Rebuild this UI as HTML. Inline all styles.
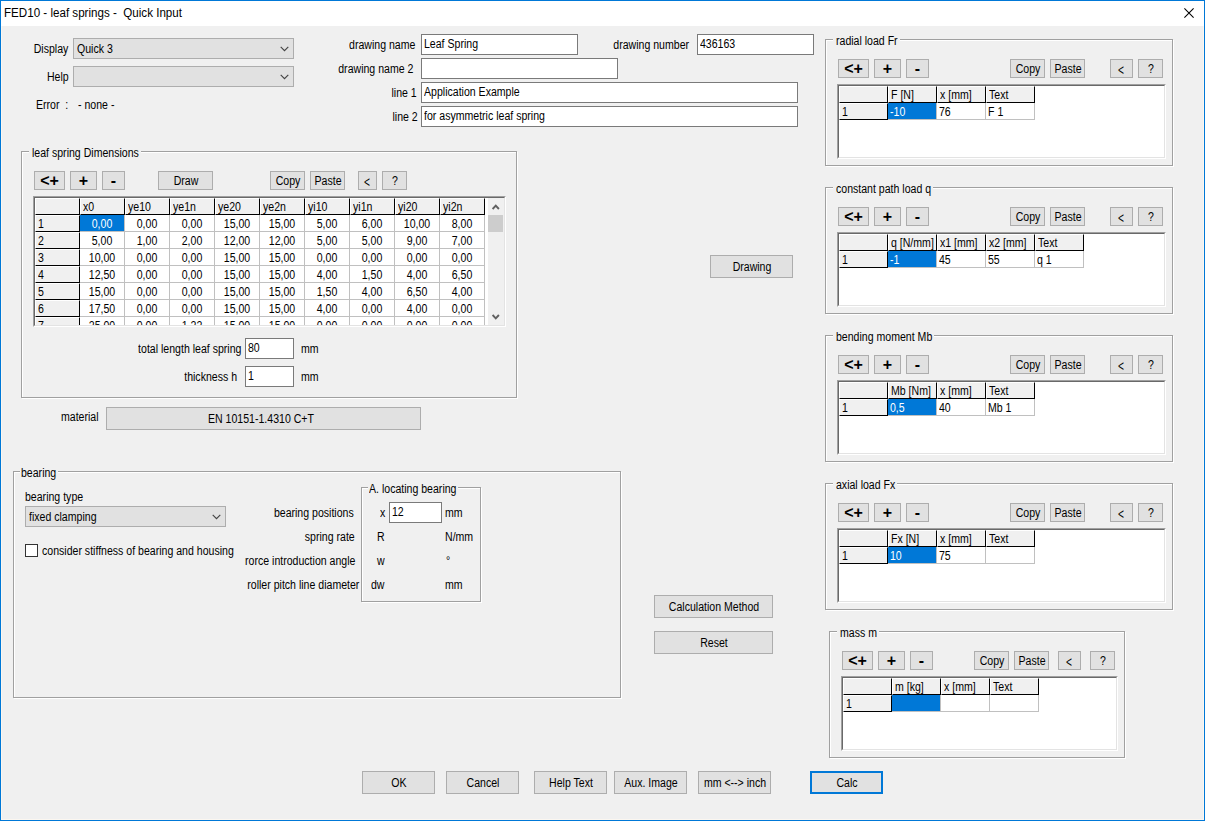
<!DOCTYPE html>
<html lang="en"><head><meta charset="utf-8"><title>FED10 - leaf springs - Quick Input</title>
<style>
html,body{margin:0;padding:0;background:#f0f0f0;overflow:hidden}
#w{position:relative;width:1205px;height:821px;overflow:hidden;font-family:"Liberation Sans",sans-serif;font-size:12px;line-height:14px;color:#000}
#w div,#w span.t,#w svg.abs,.abs{position:absolute;box-sizing:border-box}
.t{white-space:pre;display:block}
.b{font-weight:bold;font-size:16px}
.ttl{font-size:12px}
.lt{font-size:15px}
.btn{background:#e1e1e1;border:1px solid #adadad}
.def{border:2px solid #0078d7}
.inp{background:#fff;border:1px solid #7a7a7a}
.combo{background:#e1e1e1;border:1px solid #adadad}
.chk{background:#fff;border:1px solid #333}
.fg{border:1px solid #a0a0a0}
.fw{border:1px solid #fff}
.fl{background:#f0f0f0;line-height:14px}
.grido{border:1px solid;border-color:#a0a0a0 #fff #fff #a0a0a0}
.grid{background:#fff;border:1px solid;border-color:#696969 #e3e3e3 #e3e3e3 #696969;overflow:hidden}
.fx{background:#f0f0f0;border-top:1px solid #fff;border-left:1px solid #fff;border-right:1px solid #000;border-bottom:1px solid #000}
.dc{background:#fff;border-right:1px solid #c0c0c0;border-bottom:1px solid #c0c0c0}
.sel{background:#0078d7;color:#fff}
.sb{background:#f0f0f0}
</style></head>
<body><div id="w">
<div class="abs" style="left:0;top:0;width:1205px;height:821px;background:#f0f0f0"></div>
<div class="abs" style="left:0;top:0;width:1205px;height:26px;background:#fff"></div>
<span class="t ttl" style="left:4px;top:6px;transform-origin:0 0;transform:scaleX(0.967);">FED10 - leaf springs -  Quick Input</span>
<svg class="abs" style="left:1184px;top:8px" width="10" height="10" viewBox="0 0 10 10"><path d="M0.4 0.4 L9.6 9.6 M9.6 0.4 L0.4 9.6" stroke="#000" stroke-width="1.05" fill="none"/></svg>
<span class="t " style="right:1137px;top:42px;transform-origin:100% 0;transform:scaleX(0.88);">Display</span>
<div class="combo" style="left:73px;top:38px;width:221px;height:21px;"></div>
<span class="t " style="left:77px;top:42px;transform-origin:0 0;transform:scaleX(0.88);">Quick 3</span>
<svg class="abs" style="left:280px;top:46.0px" width="9" height="6" viewBox="0 0 9 6"><path d="M0.7 0.9 L4.5 4.7 L8.3 0.9" fill="none" stroke="#444" stroke-width="1.15"/></svg>
<span class="t " style="right:1136px;top:70px;transform-origin:100% 0;transform:scaleX(0.88);">Help</span>
<div class="combo" style="left:73px;top:66px;width:221px;height:21px;"></div>
<svg class="abs" style="left:280px;top:74.0px" width="9" height="6" viewBox="0 0 9 6"><path d="M0.7 0.9 L4.5 4.7 L8.3 0.9" fill="none" stroke="#444" stroke-width="1.15"/></svg>
<span class="t " style="left:36px;top:98px;transform-origin:0 0;transform:scaleX(0.88);">Error  :</span>
<span class="t " style="left:78px;top:98px;transform-origin:0 0;transform:scaleX(0.88);">- none -</span>
<span class="t " style="right:790px;top:38px;transform-origin:100% 0;transform:scaleX(0.88);">drawing name</span>
<div class="inp" style="left:421px;top:34px;width:157px;height:21px;"></div>
<span class="t " style="left:424px;top:37px;transform-origin:0 0;transform:scaleX(0.88);">Leaf Spring</span>
<span class="t " style="right:516px;top:38px;transform-origin:100% 0;transform:scaleX(0.88);">drawing number</span>
<div class="inp" style="left:697px;top:34px;width:117px;height:21px;"></div>
<span class="t " style="left:700px;top:37px;transform-origin:0 0;transform:scaleX(0.88);">436163</span>
<span class="t " style="right:792px;top:62px;transform-origin:100% 0;transform:scaleX(0.88);">drawing name 2</span>
<div class="inp" style="left:421px;top:58px;width:197px;height:21px;"></div>
<span class="t " style="right:788px;top:86px;transform-origin:100% 0;transform:scaleX(0.88);">line 1</span>
<div class="inp" style="left:421px;top:82px;width:377px;height:21px;"></div>
<span class="t " style="left:424px;top:85px;transform-origin:0 0;transform:scaleX(0.88);">Application Example</span>
<span class="t " style="right:787px;top:110px;transform-origin:100% 0;transform:scaleX(0.88);">line 2</span>
<div class="inp" style="left:421px;top:106px;width:377px;height:21px;"></div>
<span class="t " style="left:424px;top:109px;transform-origin:0 0;transform:scaleX(0.88);">for asymmetric leaf spring</span>
<div class="fw" style="left:22px;top:152px;width:496px;height:247px;"></div>
<div class="fg" style="left:21px;top:151px;width:496px;height:247px;"></div>
<div class="fl" style="left:29px;top:151px;width:112px;height:2px;"></div>
<span class="t " style="left:32px;top:146px;transform-origin:0 0;transform:scaleX(0.88);">leaf spring Dimensions</span>
<div class="btn" style="left:34px;top:171px;width:31px;height:19px;"></div>
<span class="t b" style="left:-100.5px;width:300px;text-align:center;top:174px;transform-origin:50% 0;transform:scaleX(1);">&lt;+</span>
<div class="btn" style="left:70px;top:171px;width:27px;height:19px;"></div>
<span class="t b" style="left:-66.5px;width:300px;text-align:center;top:174px;transform-origin:50% 0;transform:scaleX(1);">+</span>
<div class="btn" style="left:102px;top:171px;width:23px;height:19px;"></div>
<span class="t b" style="left:-36.5px;width:300px;text-align:center;top:174px;transform-origin:50% 0;transform:scaleX(1);">-</span>
<div class="btn" style="left:158px;top:171px;width:55px;height:19px;"></div>
<span class="t " style="left:35.5px;width:300px;text-align:center;top:174px;transform-origin:50% 0;transform:scaleX(0.88);">Draw</span>
<div class="btn" style="left:270px;top:171px;width:35px;height:19px;"></div>
<span class="t " style="left:137.5px;width:300px;text-align:center;top:174px;transform-origin:50% 0;transform:scaleX(0.88);">Copy</span>
<div class="btn" style="left:310px;top:171px;width:35px;height:19px;"></div>
<span class="t " style="left:177.5px;width:300px;text-align:center;top:174px;transform-origin:50% 0;transform:scaleX(0.88);">Paste</span>
<div class="btn" style="left:358px;top:171px;width:19px;height:19px;"></div>
<span class="t lt" style="left:217.0px;width:300px;text-align:center;top:175px;transform-origin:50% 0;transform:scaleX(0.68);">&lt;</span>
<div class="btn" style="left:382px;top:171px;width:25px;height:19px;"></div>
<span class="t " style="left:244.5px;width:300px;text-align:center;top:174px;transform-origin:50% 0;transform:scaleX(0.88);">?</span>
<div class="grido" style="left:33px;top:196px;width:473px;height:131px"><div class="grid" style="left:0;top:0;width:471px;height:129px"><div class="fx" style="left:0px;top:0px;width:45px;height:17px"></div><div class="fx" style="left:45px;top:0px;width:45px;height:17px"><span class="t" style="left:2px;top:1px;transform-origin:0 0;transform:scaleX(0.88)">x0</span></div><div class="fx" style="left:90px;top:0px;width:45px;height:17px"><span class="t" style="left:2px;top:1px;transform-origin:0 0;transform:scaleX(0.88)">ye10</span></div><div class="fx" style="left:135px;top:0px;width:45px;height:17px"><span class="t" style="left:2px;top:1px;transform-origin:0 0;transform:scaleX(0.88)">ye1n</span></div><div class="fx" style="left:180px;top:0px;width:45px;height:17px"><span class="t" style="left:2px;top:1px;transform-origin:0 0;transform:scaleX(0.88)">ye20</span></div><div class="fx" style="left:225px;top:0px;width:45px;height:17px"><span class="t" style="left:2px;top:1px;transform-origin:0 0;transform:scaleX(0.88)">ye2n</span></div><div class="fx" style="left:270px;top:0px;width:45px;height:17px"><span class="t" style="left:2px;top:1px;transform-origin:0 0;transform:scaleX(0.88)">yi10</span></div><div class="fx" style="left:315px;top:0px;width:45px;height:17px"><span class="t" style="left:2px;top:1px;transform-origin:0 0;transform:scaleX(0.88)">yi1n</span></div><div class="fx" style="left:360px;top:0px;width:45px;height:17px"><span class="t" style="left:2px;top:1px;transform-origin:0 0;transform:scaleX(0.88)">yi20</span></div><div class="fx" style="left:405px;top:0px;width:45px;height:17px"><span class="t" style="left:2px;top:1px;transform-origin:0 0;transform:scaleX(0.88)">yi2n</span></div><div class="fx" style="left:0px;top:17px;width:45px;height:17px"><span class="t" style="left:2px;top:1px;transform-origin:0 0;transform:scaleX(0.88)">1</span></div><div class="dc sel" style="left:45px;top:17px;width:45px;height:17px"><span class="t" style="left:-28.0px;width:100px;text-align:center;top:2px;transform-origin:50% 0;transform:scaleX(0.88)">0,00</span></div><div class="dc" style="left:90px;top:17px;width:45px;height:17px"><span class="t" style="left:-28.0px;width:100px;text-align:center;top:2px;transform-origin:50% 0;transform:scaleX(0.88)">0,00</span></div><div class="dc" style="left:135px;top:17px;width:45px;height:17px"><span class="t" style="left:-28.0px;width:100px;text-align:center;top:2px;transform-origin:50% 0;transform:scaleX(0.88)">0,00</span></div><div class="dc" style="left:180px;top:17px;width:45px;height:17px"><span class="t" style="left:-28.0px;width:100px;text-align:center;top:2px;transform-origin:50% 0;transform:scaleX(0.88)">15,00</span></div><div class="dc" style="left:225px;top:17px;width:45px;height:17px"><span class="t" style="left:-28.0px;width:100px;text-align:center;top:2px;transform-origin:50% 0;transform:scaleX(0.88)">15,00</span></div><div class="dc" style="left:270px;top:17px;width:45px;height:17px"><span class="t" style="left:-28.0px;width:100px;text-align:center;top:2px;transform-origin:50% 0;transform:scaleX(0.88)">5,00</span></div><div class="dc" style="left:315px;top:17px;width:45px;height:17px"><span class="t" style="left:-28.0px;width:100px;text-align:center;top:2px;transform-origin:50% 0;transform:scaleX(0.88)">6,00</span></div><div class="dc" style="left:360px;top:17px;width:45px;height:17px"><span class="t" style="left:-28.0px;width:100px;text-align:center;top:2px;transform-origin:50% 0;transform:scaleX(0.88)">10,00</span></div><div class="dc" style="left:405px;top:17px;width:45px;height:17px"><span class="t" style="left:-28.0px;width:100px;text-align:center;top:2px;transform-origin:50% 0;transform:scaleX(0.88)">8,00</span></div><div class="fx" style="left:0px;top:34px;width:45px;height:17px"><span class="t" style="left:2px;top:1px;transform-origin:0 0;transform:scaleX(0.88)">2</span></div><div class="dc" style="left:45px;top:34px;width:45px;height:17px"><span class="t" style="left:-28.0px;width:100px;text-align:center;top:2px;transform-origin:50% 0;transform:scaleX(0.88)">5,00</span></div><div class="dc" style="left:90px;top:34px;width:45px;height:17px"><span class="t" style="left:-28.0px;width:100px;text-align:center;top:2px;transform-origin:50% 0;transform:scaleX(0.88)">1,00</span></div><div class="dc" style="left:135px;top:34px;width:45px;height:17px"><span class="t" style="left:-28.0px;width:100px;text-align:center;top:2px;transform-origin:50% 0;transform:scaleX(0.88)">2,00</span></div><div class="dc" style="left:180px;top:34px;width:45px;height:17px"><span class="t" style="left:-28.0px;width:100px;text-align:center;top:2px;transform-origin:50% 0;transform:scaleX(0.88)">12,00</span></div><div class="dc" style="left:225px;top:34px;width:45px;height:17px"><span class="t" style="left:-28.0px;width:100px;text-align:center;top:2px;transform-origin:50% 0;transform:scaleX(0.88)">12,00</span></div><div class="dc" style="left:270px;top:34px;width:45px;height:17px"><span class="t" style="left:-28.0px;width:100px;text-align:center;top:2px;transform-origin:50% 0;transform:scaleX(0.88)">5,00</span></div><div class="dc" style="left:315px;top:34px;width:45px;height:17px"><span class="t" style="left:-28.0px;width:100px;text-align:center;top:2px;transform-origin:50% 0;transform:scaleX(0.88)">5,00</span></div><div class="dc" style="left:360px;top:34px;width:45px;height:17px"><span class="t" style="left:-28.0px;width:100px;text-align:center;top:2px;transform-origin:50% 0;transform:scaleX(0.88)">9,00</span></div><div class="dc" style="left:405px;top:34px;width:45px;height:17px"><span class="t" style="left:-28.0px;width:100px;text-align:center;top:2px;transform-origin:50% 0;transform:scaleX(0.88)">7,00</span></div><div class="fx" style="left:0px;top:51px;width:45px;height:17px"><span class="t" style="left:2px;top:1px;transform-origin:0 0;transform:scaleX(0.88)">3</span></div><div class="dc" style="left:45px;top:51px;width:45px;height:17px"><span class="t" style="left:-28.0px;width:100px;text-align:center;top:2px;transform-origin:50% 0;transform:scaleX(0.88)">10,00</span></div><div class="dc" style="left:90px;top:51px;width:45px;height:17px"><span class="t" style="left:-28.0px;width:100px;text-align:center;top:2px;transform-origin:50% 0;transform:scaleX(0.88)">0,00</span></div><div class="dc" style="left:135px;top:51px;width:45px;height:17px"><span class="t" style="left:-28.0px;width:100px;text-align:center;top:2px;transform-origin:50% 0;transform:scaleX(0.88)">0,00</span></div><div class="dc" style="left:180px;top:51px;width:45px;height:17px"><span class="t" style="left:-28.0px;width:100px;text-align:center;top:2px;transform-origin:50% 0;transform:scaleX(0.88)">15,00</span></div><div class="dc" style="left:225px;top:51px;width:45px;height:17px"><span class="t" style="left:-28.0px;width:100px;text-align:center;top:2px;transform-origin:50% 0;transform:scaleX(0.88)">15,00</span></div><div class="dc" style="left:270px;top:51px;width:45px;height:17px"><span class="t" style="left:-28.0px;width:100px;text-align:center;top:2px;transform-origin:50% 0;transform:scaleX(0.88)">0,00</span></div><div class="dc" style="left:315px;top:51px;width:45px;height:17px"><span class="t" style="left:-28.0px;width:100px;text-align:center;top:2px;transform-origin:50% 0;transform:scaleX(0.88)">0,00</span></div><div class="dc" style="left:360px;top:51px;width:45px;height:17px"><span class="t" style="left:-28.0px;width:100px;text-align:center;top:2px;transform-origin:50% 0;transform:scaleX(0.88)">0,00</span></div><div class="dc" style="left:405px;top:51px;width:45px;height:17px"><span class="t" style="left:-28.0px;width:100px;text-align:center;top:2px;transform-origin:50% 0;transform:scaleX(0.88)">0,00</span></div><div class="fx" style="left:0px;top:68px;width:45px;height:17px"><span class="t" style="left:2px;top:1px;transform-origin:0 0;transform:scaleX(0.88)">4</span></div><div class="dc" style="left:45px;top:68px;width:45px;height:17px"><span class="t" style="left:-28.0px;width:100px;text-align:center;top:2px;transform-origin:50% 0;transform:scaleX(0.88)">12,50</span></div><div class="dc" style="left:90px;top:68px;width:45px;height:17px"><span class="t" style="left:-28.0px;width:100px;text-align:center;top:2px;transform-origin:50% 0;transform:scaleX(0.88)">0,00</span></div><div class="dc" style="left:135px;top:68px;width:45px;height:17px"><span class="t" style="left:-28.0px;width:100px;text-align:center;top:2px;transform-origin:50% 0;transform:scaleX(0.88)">0,00</span></div><div class="dc" style="left:180px;top:68px;width:45px;height:17px"><span class="t" style="left:-28.0px;width:100px;text-align:center;top:2px;transform-origin:50% 0;transform:scaleX(0.88)">15,00</span></div><div class="dc" style="left:225px;top:68px;width:45px;height:17px"><span class="t" style="left:-28.0px;width:100px;text-align:center;top:2px;transform-origin:50% 0;transform:scaleX(0.88)">15,00</span></div><div class="dc" style="left:270px;top:68px;width:45px;height:17px"><span class="t" style="left:-28.0px;width:100px;text-align:center;top:2px;transform-origin:50% 0;transform:scaleX(0.88)">4,00</span></div><div class="dc" style="left:315px;top:68px;width:45px;height:17px"><span class="t" style="left:-28.0px;width:100px;text-align:center;top:2px;transform-origin:50% 0;transform:scaleX(0.88)">1,50</span></div><div class="dc" style="left:360px;top:68px;width:45px;height:17px"><span class="t" style="left:-28.0px;width:100px;text-align:center;top:2px;transform-origin:50% 0;transform:scaleX(0.88)">4,00</span></div><div class="dc" style="left:405px;top:68px;width:45px;height:17px"><span class="t" style="left:-28.0px;width:100px;text-align:center;top:2px;transform-origin:50% 0;transform:scaleX(0.88)">6,50</span></div><div class="fx" style="left:0px;top:85px;width:45px;height:17px"><span class="t" style="left:2px;top:1px;transform-origin:0 0;transform:scaleX(0.88)">5</span></div><div class="dc" style="left:45px;top:85px;width:45px;height:17px"><span class="t" style="left:-28.0px;width:100px;text-align:center;top:2px;transform-origin:50% 0;transform:scaleX(0.88)">15,00</span></div><div class="dc" style="left:90px;top:85px;width:45px;height:17px"><span class="t" style="left:-28.0px;width:100px;text-align:center;top:2px;transform-origin:50% 0;transform:scaleX(0.88)">0,00</span></div><div class="dc" style="left:135px;top:85px;width:45px;height:17px"><span class="t" style="left:-28.0px;width:100px;text-align:center;top:2px;transform-origin:50% 0;transform:scaleX(0.88)">0,00</span></div><div class="dc" style="left:180px;top:85px;width:45px;height:17px"><span class="t" style="left:-28.0px;width:100px;text-align:center;top:2px;transform-origin:50% 0;transform:scaleX(0.88)">15,00</span></div><div class="dc" style="left:225px;top:85px;width:45px;height:17px"><span class="t" style="left:-28.0px;width:100px;text-align:center;top:2px;transform-origin:50% 0;transform:scaleX(0.88)">15,00</span></div><div class="dc" style="left:270px;top:85px;width:45px;height:17px"><span class="t" style="left:-28.0px;width:100px;text-align:center;top:2px;transform-origin:50% 0;transform:scaleX(0.88)">1,50</span></div><div class="dc" style="left:315px;top:85px;width:45px;height:17px"><span class="t" style="left:-28.0px;width:100px;text-align:center;top:2px;transform-origin:50% 0;transform:scaleX(0.88)">4,00</span></div><div class="dc" style="left:360px;top:85px;width:45px;height:17px"><span class="t" style="left:-28.0px;width:100px;text-align:center;top:2px;transform-origin:50% 0;transform:scaleX(0.88)">6,50</span></div><div class="dc" style="left:405px;top:85px;width:45px;height:17px"><span class="t" style="left:-28.0px;width:100px;text-align:center;top:2px;transform-origin:50% 0;transform:scaleX(0.88)">4,00</span></div><div class="fx" style="left:0px;top:102px;width:45px;height:17px"><span class="t" style="left:2px;top:1px;transform-origin:0 0;transform:scaleX(0.88)">6</span></div><div class="dc" style="left:45px;top:102px;width:45px;height:17px"><span class="t" style="left:-28.0px;width:100px;text-align:center;top:2px;transform-origin:50% 0;transform:scaleX(0.88)">17,50</span></div><div class="dc" style="left:90px;top:102px;width:45px;height:17px"><span class="t" style="left:-28.0px;width:100px;text-align:center;top:2px;transform-origin:50% 0;transform:scaleX(0.88)">0,00</span></div><div class="dc" style="left:135px;top:102px;width:45px;height:17px"><span class="t" style="left:-28.0px;width:100px;text-align:center;top:2px;transform-origin:50% 0;transform:scaleX(0.88)">0,00</span></div><div class="dc" style="left:180px;top:102px;width:45px;height:17px"><span class="t" style="left:-28.0px;width:100px;text-align:center;top:2px;transform-origin:50% 0;transform:scaleX(0.88)">15,00</span></div><div class="dc" style="left:225px;top:102px;width:45px;height:17px"><span class="t" style="left:-28.0px;width:100px;text-align:center;top:2px;transform-origin:50% 0;transform:scaleX(0.88)">15,00</span></div><div class="dc" style="left:270px;top:102px;width:45px;height:17px"><span class="t" style="left:-28.0px;width:100px;text-align:center;top:2px;transform-origin:50% 0;transform:scaleX(0.88)">4,00</span></div><div class="dc" style="left:315px;top:102px;width:45px;height:17px"><span class="t" style="left:-28.0px;width:100px;text-align:center;top:2px;transform-origin:50% 0;transform:scaleX(0.88)">0,00</span></div><div class="dc" style="left:360px;top:102px;width:45px;height:17px"><span class="t" style="left:-28.0px;width:100px;text-align:center;top:2px;transform-origin:50% 0;transform:scaleX(0.88)">4,00</span></div><div class="dc" style="left:405px;top:102px;width:45px;height:17px"><span class="t" style="left:-28.0px;width:100px;text-align:center;top:2px;transform-origin:50% 0;transform:scaleX(0.88)">0,00</span></div><div class="fx" style="left:0px;top:119px;width:45px;height:17px"><span class="t" style="left:2px;top:1px;transform-origin:0 0;transform:scaleX(0.88)">7</span></div><div class="dc" style="left:45px;top:119px;width:45px;height:17px"><span class="t" style="left:-28.0px;width:100px;text-align:center;top:2px;transform-origin:50% 0;transform:scaleX(0.88)">25,00</span></div><div class="dc" style="left:90px;top:119px;width:45px;height:17px"><span class="t" style="left:-28.0px;width:100px;text-align:center;top:2px;transform-origin:50% 0;transform:scaleX(0.88)">0,00</span></div><div class="dc" style="left:135px;top:119px;width:45px;height:17px"><span class="t" style="left:-28.0px;width:100px;text-align:center;top:2px;transform-origin:50% 0;transform:scaleX(0.88)">1,22</span></div><div class="dc" style="left:180px;top:119px;width:45px;height:17px"><span class="t" style="left:-28.0px;width:100px;text-align:center;top:2px;transform-origin:50% 0;transform:scaleX(0.88)">15,00</span></div><div class="dc" style="left:225px;top:119px;width:45px;height:17px"><span class="t" style="left:-28.0px;width:100px;text-align:center;top:2px;transform-origin:50% 0;transform:scaleX(0.88)">15,00</span></div><div class="dc" style="left:270px;top:119px;width:45px;height:17px"><span class="t" style="left:-28.0px;width:100px;text-align:center;top:2px;transform-origin:50% 0;transform:scaleX(0.88)">0,00</span></div><div class="dc" style="left:315px;top:119px;width:45px;height:17px"><span class="t" style="left:-28.0px;width:100px;text-align:center;top:2px;transform-origin:50% 0;transform:scaleX(0.88)">0,00</span></div><div class="dc" style="left:360px;top:119px;width:45px;height:17px"><span class="t" style="left:-28.0px;width:100px;text-align:center;top:2px;transform-origin:50% 0;transform:scaleX(0.88)">0,00</span></div><div class="dc" style="left:405px;top:119px;width:45px;height:17px"><span class="t" style="left:-28.0px;width:100px;text-align:center;top:2px;transform-origin:50% 0;transform:scaleX(0.88)">0,00</span></div><div class="sb" style="left:453px;top:0;width:16px;height:127px"><svg class="abs" style="left:4px;top:6px" width="8" height="6" viewBox="0 0 8 6"><path d="M0.6 5 L3.75 1.6 L6.9 5" fill="none" stroke="#606060" stroke-width="1.9"/></svg><div class="abs" style="left:0px;top:17px;width:15px;height:17px;background:#cdcdcd"></div><svg class="abs" style="left:4px;top:116px" width="8" height="6" viewBox="0 0 8 6"><path d="M0.6 1 L3.75 4.4 L6.9 1" fill="none" stroke="#606060" stroke-width="1.9"/></svg></div></div></div>
<span class="t " style="right:964px;top:342px;transform-origin:100% 0;transform:scaleX(0.88);">total length leaf spring</span>
<div class="inp" style="left:245px;top:338px;width:49px;height:21px;"></div>
<span class="t " style="left:248px;top:341px;transform-origin:0 0;transform:scaleX(0.88);">80</span>
<span class="t " style="left:301px;top:342px;transform-origin:0 0;transform:scaleX(0.88);">mm</span>
<span class="t " style="right:968px;top:370px;transform-origin:100% 0;transform:scaleX(0.88);">thickness h</span>
<div class="inp" style="left:245px;top:366px;width:49px;height:21px;"></div>
<span class="t " style="left:248px;top:369px;transform-origin:0 0;transform:scaleX(0.88);">1</span>
<span class="t " style="left:301px;top:370px;transform-origin:0 0;transform:scaleX(0.88);">mm</span>
<span class="t " style="left:61px;top:410px;transform-origin:0 0;transform:scaleX(0.88);">material</span>
<div class="btn" style="left:106px;top:407px;width:315px;height:23px;"></div>
<span class="t " style="left:111.0px;width:300px;text-align:center;top:412px;transform-origin:50% 0;transform:scaleX(0.88);">EN 10151-1.4310 C+T</span>
<div class="fw" style="left:14px;top:472px;width:608px;height:227px;"></div>
<div class="fg" style="left:13px;top:471px;width:608px;height:227px;"></div>
<div class="fl" style="left:20px;top:471px;width:38px;height:2px;"></div>
<span class="t " style="left:21px;top:466px;transform-origin:0 0;transform:scaleX(0.88);">bearing</span>
<span class="t " style="left:25px;top:490px;transform-origin:0 0;transform:scaleX(0.88);">bearing type</span>
<div class="combo" style="left:25px;top:506px;width:201px;height:21px;"></div>
<span class="t " style="left:29px;top:510px;transform-origin:0 0;transform:scaleX(0.88);">fixed clamping</span>
<svg class="abs" style="left:212px;top:514.0px" width="9" height="6" viewBox="0 0 9 6"><path d="M0.7 0.9 L4.5 4.7 L8.3 0.9" fill="none" stroke="#444" stroke-width="1.15"/></svg>
<div class="chk" style="left:25px;top:544px;width:13px;height:13px;"></div>
<span class="t " style="left:42px;top:544px;transform-origin:0 0;transform:scaleX(0.88);">consider stiffness of bearing and housing</span>
<div class="fw" style="left:362px;top:488px;width:120px;height:115px;"></div>
<div class="fg" style="left:361px;top:487px;width:120px;height:115px;"></div>
<div class="fl" style="left:368px;top:487px;width:90px;height:2px;"></div>
<span class="t " style="left:369px;top:482px;transform-origin:0 0;transform:scaleX(0.88);">A. locating bearing</span>
<span class="t " style="right:851px;top:506px;transform-origin:100% 0;transform:scaleX(0.88);">bearing positions</span>
<span class="t " style="right:850px;top:530px;transform-origin:100% 0;transform:scaleX(0.88);">spring rate</span>
<span class="t " style="right:850px;top:554px;transform-origin:100% 0;transform:scaleX(0.88);">rorce introduction angle</span>
<span class="t " style="right:846px;top:578px;transform-origin:100% 0;transform:scaleX(0.88);">roller pitch line diameter</span>
<span class="t " style="left:380px;top:506px;transform-origin:0 0;transform:scaleX(0.88);">x</span>
<div class="inp" style="left:389px;top:502px;width:53px;height:21px;"></div>
<span class="t " style="left:392px;top:505px;transform-origin:0 0;transform:scaleX(0.88);">12</span>
<span class="t " style="left:445px;top:506px;transform-origin:0 0;transform:scaleX(0.88);">mm</span>
<span class="t " style="left:377px;top:530px;transform-origin:0 0;transform:scaleX(0.88);">R</span>
<span class="t " style="left:445px;top:530px;transform-origin:0 0;transform:scaleX(0.88);">N/mm</span>
<span class="t " style="left:377px;top:554px;transform-origin:0 0;transform:scaleX(0.88);">w</span>
<span class="t " style="left:446px;top:554px;transform-origin:0 0;transform:scaleX(0.88);">°</span>
<span class="t " style="left:371px;top:578px;transform-origin:0 0;transform:scaleX(0.88);">dw</span>
<span class="t " style="left:445px;top:578px;transform-origin:0 0;transform:scaleX(0.88);">mm</span>
<div class="btn" style="left:710px;top:255px;width:83px;height:23px;"></div>
<span class="t " style="left:601.5px;width:300px;text-align:center;top:260px;transform-origin:50% 0;transform:scaleX(0.88);">Drawing</span>
<div class="btn" style="left:654px;top:595px;width:119px;height:23px;"></div>
<span class="t " style="left:563.5px;width:300px;text-align:center;top:600px;transform-origin:50% 0;transform:scaleX(0.88);">Calculation Method</span>
<div class="btn" style="left:654px;top:631px;width:119px;height:23px;"></div>
<span class="t " style="left:563.5px;width:300px;text-align:center;top:636px;transform-origin:50% 0;transform:scaleX(0.88);">Reset</span>
<div class="btn" style="left:362px;top:771px;width:73px;height:23px;"></div>
<span class="t " style="left:248.5px;width:300px;text-align:center;top:776px;transform-origin:50% 0;transform:scaleX(0.88);">OK</span>
<div class="btn" style="left:446px;top:771px;width:73px;height:23px;"></div>
<span class="t " style="left:332.5px;width:300px;text-align:center;top:776px;transform-origin:50% 0;transform:scaleX(0.88);">Cancel</span>
<div class="btn" style="left:534px;top:771px;width:73px;height:23px;"></div>
<span class="t " style="left:420.5px;width:300px;text-align:center;top:776px;transform-origin:50% 0;transform:scaleX(0.88);">Help Text</span>
<div class="btn" style="left:614px;top:771px;width:73px;height:23px;"></div>
<span class="t " style="left:500.5px;width:300px;text-align:center;top:776px;transform-origin:50% 0;transform:scaleX(0.88);">Aux. Image</span>
<div class="btn" style="left:698px;top:771px;width:73px;height:23px;"></div>
<span class="t " style="left:584.5px;width:300px;text-align:center;top:776px;transform-origin:50% 0;transform:scaleX(0.88);">mm &lt;--&gt; inch</span>
<div class="btn def" style="left:810px;top:771px;width:73px;height:23px;"></div>
<span class="t " style="left:696.5px;width:300px;text-align:center;top:776px;transform-origin:50% 0;transform:scaleX(0.88);">Calc</span>
<div class="fw" style="left:826px;top:40px;width:348px;height:127px;"></div>
<div class="fg" style="left:825px;top:39px;width:348px;height:127px;"></div>
<div class="fl" style="left:833px;top:39px;width:67px;height:2px;"></div>
<span class="t " style="left:836px;top:34px;transform-origin:0 0;transform:scaleX(0.88);">radial load Fr</span>
<div class="btn" style="left:838px;top:59px;width:31px;height:19px;"></div>
<span class="t b" style="left:703.5px;width:300px;text-align:center;top:62px;transform-origin:50% 0;transform:scaleX(1);">&lt;+</span>
<div class="btn" style="left:874px;top:59px;width:27px;height:19px;"></div>
<span class="t b" style="left:737.5px;width:300px;text-align:center;top:62px;transform-origin:50% 0;transform:scaleX(1);">+</span>
<div class="btn" style="left:906px;top:59px;width:23px;height:19px;"></div>
<span class="t b" style="left:767.5px;width:300px;text-align:center;top:62px;transform-origin:50% 0;transform:scaleX(1);">-</span>
<div class="btn" style="left:1010px;top:59px;width:35px;height:19px;"></div>
<span class="t " style="left:877.5px;width:300px;text-align:center;top:62px;transform-origin:50% 0;transform:scaleX(0.88);">Copy</span>
<div class="btn" style="left:1050px;top:59px;width:35px;height:19px;"></div>
<span class="t " style="left:917.5px;width:300px;text-align:center;top:62px;transform-origin:50% 0;transform:scaleX(0.88);">Paste</span>
<div class="btn" style="left:1110px;top:59px;width:23px;height:19px;"></div>
<span class="t lt" style="left:971.0px;width:300px;text-align:center;top:63px;transform-origin:50% 0;transform:scaleX(0.68);">&lt;</span>
<div class="btn" style="left:1138px;top:59px;width:25px;height:19px;"></div>
<span class="t " style="left:1000.5px;width:300px;text-align:center;top:62px;transform-origin:50% 0;transform:scaleX(0.88);">?</span>
<div class="grido" style="left:837px;top:84px;width:329px;height:75px"><div class="grid" style="left:0;top:0;width:327px;height:73px"><div class="fx" style="left:0px;top:0px;width:49px;height:17px"></div><div class="fx" style="left:49px;top:0px;width:49px;height:17px"><span class="t" style="left:2px;top:1px;transform-origin:0 0;transform:scaleX(0.88)">F [N]</span></div><div class="fx" style="left:98px;top:0px;width:49px;height:17px"><span class="t" style="left:2px;top:1px;transform-origin:0 0;transform:scaleX(0.88)">x [mm]</span></div><div class="fx" style="left:147px;top:0px;width:49px;height:17px"><span class="t" style="left:2px;top:1px;transform-origin:0 0;transform:scaleX(0.88)">Text</span></div><div class="fx" style="left:0px;top:17px;width:49px;height:17px"><span class="t" style="left:2px;top:1px;transform-origin:0 0;transform:scaleX(0.88)">1</span></div><div class="dc sel" style="left:49px;top:17px;width:49px;height:17px"><span class="t" style="left:2px;top:2px;transform-origin:0 0;transform:scaleX(0.88)">-10</span></div><div class="dc" style="left:98px;top:17px;width:49px;height:17px"><span class="t" style="left:2px;top:2px;transform-origin:0 0;transform:scaleX(0.88)">76</span></div><div class="dc" style="left:147px;top:17px;width:49px;height:17px"><span class="t" style="left:2px;top:2px;transform-origin:0 0;transform:scaleX(0.88)">F 1</span></div></div></div>
<div class="fw" style="left:826px;top:188px;width:348px;height:127px;"></div>
<div class="fg" style="left:825px;top:187px;width:348px;height:127px;"></div>
<div class="fl" style="left:833px;top:187px;width:100px;height:2px;"></div>
<span class="t " style="left:836px;top:182px;transform-origin:0 0;transform:scaleX(0.88);">constant path load q</span>
<div class="btn" style="left:838px;top:207px;width:31px;height:19px;"></div>
<span class="t b" style="left:703.5px;width:300px;text-align:center;top:210px;transform-origin:50% 0;transform:scaleX(1);">&lt;+</span>
<div class="btn" style="left:874px;top:207px;width:27px;height:19px;"></div>
<span class="t b" style="left:737.5px;width:300px;text-align:center;top:210px;transform-origin:50% 0;transform:scaleX(1);">+</span>
<div class="btn" style="left:906px;top:207px;width:23px;height:19px;"></div>
<span class="t b" style="left:767.5px;width:300px;text-align:center;top:210px;transform-origin:50% 0;transform:scaleX(1);">-</span>
<div class="btn" style="left:1010px;top:207px;width:35px;height:19px;"></div>
<span class="t " style="left:877.5px;width:300px;text-align:center;top:210px;transform-origin:50% 0;transform:scaleX(0.88);">Copy</span>
<div class="btn" style="left:1050px;top:207px;width:35px;height:19px;"></div>
<span class="t " style="left:917.5px;width:300px;text-align:center;top:210px;transform-origin:50% 0;transform:scaleX(0.88);">Paste</span>
<div class="btn" style="left:1110px;top:207px;width:23px;height:19px;"></div>
<span class="t lt" style="left:971.0px;width:300px;text-align:center;top:211px;transform-origin:50% 0;transform:scaleX(0.68);">&lt;</span>
<div class="btn" style="left:1138px;top:207px;width:25px;height:19px;"></div>
<span class="t " style="left:1000.5px;width:300px;text-align:center;top:210px;transform-origin:50% 0;transform:scaleX(0.88);">?</span>
<div class="grido" style="left:837px;top:232px;width:329px;height:75px"><div class="grid" style="left:0;top:0;width:327px;height:73px"><div class="fx" style="left:0px;top:0px;width:49px;height:17px"></div><div class="fx" style="left:49px;top:0px;width:49px;height:17px"><span class="t" style="left:2px;top:1px;transform-origin:0 0;transform:scaleX(0.88)">q [N/mm]</span></div><div class="fx" style="left:98px;top:0px;width:49px;height:17px"><span class="t" style="left:2px;top:1px;transform-origin:0 0;transform:scaleX(0.88)">x1 [mm]</span></div><div class="fx" style="left:147px;top:0px;width:49px;height:17px"><span class="t" style="left:2px;top:1px;transform-origin:0 0;transform:scaleX(0.88)">x2 [mm]</span></div><div class="fx" style="left:196px;top:0px;width:49px;height:17px"><span class="t" style="left:2px;top:1px;transform-origin:0 0;transform:scaleX(0.88)">Text</span></div><div class="fx" style="left:0px;top:17px;width:49px;height:17px"><span class="t" style="left:2px;top:1px;transform-origin:0 0;transform:scaleX(0.88)">1</span></div><div class="dc sel" style="left:49px;top:17px;width:49px;height:17px"><span class="t" style="left:2px;top:2px;transform-origin:0 0;transform:scaleX(0.88)">-1</span></div><div class="dc" style="left:98px;top:17px;width:49px;height:17px"><span class="t" style="left:2px;top:2px;transform-origin:0 0;transform:scaleX(0.88)">45</span></div><div class="dc" style="left:147px;top:17px;width:49px;height:17px"><span class="t" style="left:2px;top:2px;transform-origin:0 0;transform:scaleX(0.88)">55</span></div><div class="dc" style="left:196px;top:17px;width:49px;height:17px"><span class="t" style="left:2px;top:2px;transform-origin:0 0;transform:scaleX(0.88)">q 1</span></div></div></div>
<div class="fw" style="left:826px;top:336px;width:348px;height:127px;"></div>
<div class="fg" style="left:825px;top:335px;width:348px;height:127px;"></div>
<div class="fl" style="left:833px;top:335px;width:101px;height:2px;"></div>
<span class="t " style="left:836px;top:330px;transform-origin:0 0;transform:scaleX(0.88);">bending moment Mb</span>
<div class="btn" style="left:838px;top:355px;width:31px;height:19px;"></div>
<span class="t b" style="left:703.5px;width:300px;text-align:center;top:358px;transform-origin:50% 0;transform:scaleX(1);">&lt;+</span>
<div class="btn" style="left:874px;top:355px;width:27px;height:19px;"></div>
<span class="t b" style="left:737.5px;width:300px;text-align:center;top:358px;transform-origin:50% 0;transform:scaleX(1);">+</span>
<div class="btn" style="left:906px;top:355px;width:23px;height:19px;"></div>
<span class="t b" style="left:767.5px;width:300px;text-align:center;top:358px;transform-origin:50% 0;transform:scaleX(1);">-</span>
<div class="btn" style="left:1010px;top:355px;width:35px;height:19px;"></div>
<span class="t " style="left:877.5px;width:300px;text-align:center;top:358px;transform-origin:50% 0;transform:scaleX(0.88);">Copy</span>
<div class="btn" style="left:1050px;top:355px;width:35px;height:19px;"></div>
<span class="t " style="left:917.5px;width:300px;text-align:center;top:358px;transform-origin:50% 0;transform:scaleX(0.88);">Paste</span>
<div class="btn" style="left:1110px;top:355px;width:23px;height:19px;"></div>
<span class="t lt" style="left:971.0px;width:300px;text-align:center;top:359px;transform-origin:50% 0;transform:scaleX(0.68);">&lt;</span>
<div class="btn" style="left:1138px;top:355px;width:25px;height:19px;"></div>
<span class="t " style="left:1000.5px;width:300px;text-align:center;top:358px;transform-origin:50% 0;transform:scaleX(0.88);">?</span>
<div class="grido" style="left:837px;top:380px;width:329px;height:75px"><div class="grid" style="left:0;top:0;width:327px;height:73px"><div class="fx" style="left:0px;top:0px;width:49px;height:17px"></div><div class="fx" style="left:49px;top:0px;width:49px;height:17px"><span class="t" style="left:2px;top:1px;transform-origin:0 0;transform:scaleX(0.88)">Mb [Nm]</span></div><div class="fx" style="left:98px;top:0px;width:49px;height:17px"><span class="t" style="left:2px;top:1px;transform-origin:0 0;transform:scaleX(0.88)">x [mm]</span></div><div class="fx" style="left:147px;top:0px;width:49px;height:17px"><span class="t" style="left:2px;top:1px;transform-origin:0 0;transform:scaleX(0.88)">Text</span></div><div class="fx" style="left:0px;top:17px;width:49px;height:17px"><span class="t" style="left:2px;top:1px;transform-origin:0 0;transform:scaleX(0.88)">1</span></div><div class="dc sel" style="left:49px;top:17px;width:49px;height:17px"><span class="t" style="left:2px;top:2px;transform-origin:0 0;transform:scaleX(0.88)">0,5</span></div><div class="dc" style="left:98px;top:17px;width:49px;height:17px"><span class="t" style="left:2px;top:2px;transform-origin:0 0;transform:scaleX(0.88)">40</span></div><div class="dc" style="left:147px;top:17px;width:49px;height:17px"><span class="t" style="left:2px;top:2px;transform-origin:0 0;transform:scaleX(0.88)">Mb 1</span></div></div></div>
<div class="fw" style="left:826px;top:484px;width:348px;height:127px;"></div>
<div class="fg" style="left:825px;top:483px;width:348px;height:127px;"></div>
<div class="fl" style="left:833px;top:483px;width:64px;height:2px;"></div>
<span class="t " style="left:836px;top:478px;transform-origin:0 0;transform:scaleX(0.88);">axial load Fx</span>
<div class="btn" style="left:838px;top:503px;width:31px;height:19px;"></div>
<span class="t b" style="left:703.5px;width:300px;text-align:center;top:506px;transform-origin:50% 0;transform:scaleX(1);">&lt;+</span>
<div class="btn" style="left:874px;top:503px;width:27px;height:19px;"></div>
<span class="t b" style="left:737.5px;width:300px;text-align:center;top:506px;transform-origin:50% 0;transform:scaleX(1);">+</span>
<div class="btn" style="left:906px;top:503px;width:23px;height:19px;"></div>
<span class="t b" style="left:767.5px;width:300px;text-align:center;top:506px;transform-origin:50% 0;transform:scaleX(1);">-</span>
<div class="btn" style="left:1010px;top:503px;width:35px;height:19px;"></div>
<span class="t " style="left:877.5px;width:300px;text-align:center;top:506px;transform-origin:50% 0;transform:scaleX(0.88);">Copy</span>
<div class="btn" style="left:1050px;top:503px;width:35px;height:19px;"></div>
<span class="t " style="left:917.5px;width:300px;text-align:center;top:506px;transform-origin:50% 0;transform:scaleX(0.88);">Paste</span>
<div class="btn" style="left:1110px;top:503px;width:23px;height:19px;"></div>
<span class="t lt" style="left:971.0px;width:300px;text-align:center;top:507px;transform-origin:50% 0;transform:scaleX(0.68);">&lt;</span>
<div class="btn" style="left:1138px;top:503px;width:25px;height:19px;"></div>
<span class="t " style="left:1000.5px;width:300px;text-align:center;top:506px;transform-origin:50% 0;transform:scaleX(0.88);">?</span>
<div class="grido" style="left:837px;top:528px;width:329px;height:75px"><div class="grid" style="left:0;top:0;width:327px;height:73px"><div class="fx" style="left:0px;top:0px;width:49px;height:17px"></div><div class="fx" style="left:49px;top:0px;width:49px;height:17px"><span class="t" style="left:2px;top:1px;transform-origin:0 0;transform:scaleX(0.88)">Fx [N]</span></div><div class="fx" style="left:98px;top:0px;width:49px;height:17px"><span class="t" style="left:2px;top:1px;transform-origin:0 0;transform:scaleX(0.88)">x [mm]</span></div><div class="fx" style="left:147px;top:0px;width:49px;height:17px"><span class="t" style="left:2px;top:1px;transform-origin:0 0;transform:scaleX(0.88)">Text</span></div><div class="fx" style="left:0px;top:17px;width:49px;height:17px"><span class="t" style="left:2px;top:1px;transform-origin:0 0;transform:scaleX(0.88)">1</span></div><div class="dc sel" style="left:49px;top:17px;width:49px;height:17px"><span class="t" style="left:2px;top:2px;transform-origin:0 0;transform:scaleX(0.88)">10</span></div><div class="dc" style="left:98px;top:17px;width:49px;height:17px"><span class="t" style="left:2px;top:2px;transform-origin:0 0;transform:scaleX(0.88)">75</span></div><div class="dc" style="left:147px;top:17px;width:49px;height:17px"></div></div></div>
<div class="fw" style="left:830px;top:632px;width:296px;height:127px;"></div>
<div class="fg" style="left:829px;top:631px;width:296px;height:127px;"></div>
<div class="fl" style="left:837px;top:631px;width:42px;height:2px;"></div>
<span class="t " style="left:840px;top:626px;transform-origin:0 0;transform:scaleX(0.88);">mass m</span>
<div class="btn" style="left:842px;top:651px;width:31px;height:19px;"></div>
<span class="t b" style="left:707.5px;width:300px;text-align:center;top:654px;transform-origin:50% 0;transform:scaleX(1);">&lt;+</span>
<div class="btn" style="left:878px;top:651px;width:27px;height:19px;"></div>
<span class="t b" style="left:741.5px;width:300px;text-align:center;top:654px;transform-origin:50% 0;transform:scaleX(1);">+</span>
<div class="btn" style="left:910px;top:651px;width:23px;height:19px;"></div>
<span class="t b" style="left:771.5px;width:300px;text-align:center;top:654px;transform-origin:50% 0;transform:scaleX(1);">-</span>
<div class="btn" style="left:974px;top:651px;width:35px;height:19px;"></div>
<span class="t " style="left:841.5px;width:300px;text-align:center;top:654px;transform-origin:50% 0;transform:scaleX(0.88);">Copy</span>
<div class="btn" style="left:1014px;top:651px;width:35px;height:19px;"></div>
<span class="t " style="left:881.5px;width:300px;text-align:center;top:654px;transform-origin:50% 0;transform:scaleX(0.88);">Paste</span>
<div class="btn" style="left:1058px;top:651px;width:23px;height:19px;"></div>
<span class="t lt" style="left:919.0px;width:300px;text-align:center;top:655px;transform-origin:50% 0;transform:scaleX(0.68);">&lt;</span>
<div class="btn" style="left:1090px;top:651px;width:25px;height:19px;"></div>
<span class="t " style="left:952.5px;width:300px;text-align:center;top:654px;transform-origin:50% 0;transform:scaleX(0.88);">?</span>
<div class="grido" style="left:841px;top:676px;width:277px;height:75px"><div class="grid" style="left:0;top:0;width:275px;height:73px"><div class="fx" style="left:0px;top:0px;width:49px;height:17px"></div><div class="fx" style="left:49px;top:0px;width:49px;height:17px"><span class="t" style="left:2px;top:1px;transform-origin:0 0;transform:scaleX(0.88)">m [kg]</span></div><div class="fx" style="left:98px;top:0px;width:49px;height:17px"><span class="t" style="left:2px;top:1px;transform-origin:0 0;transform:scaleX(0.88)">x [mm]</span></div><div class="fx" style="left:147px;top:0px;width:49px;height:17px"><span class="t" style="left:2px;top:1px;transform-origin:0 0;transform:scaleX(0.88)">Text</span></div><div class="fx" style="left:0px;top:17px;width:49px;height:17px"><span class="t" style="left:2px;top:1px;transform-origin:0 0;transform:scaleX(0.88)">1</span></div><div class="dc sel" style="left:49px;top:17px;width:49px;height:17px"></div><div class="dc" style="left:98px;top:17px;width:49px;height:17px"></div><div class="dc" style="left:147px;top:17px;width:49px;height:17px"></div></div></div>
<div class="abs" style="left:1px;top:26px;width:1px;height:794px;background:#fcf7f0"></div>
<div class="abs" style="left:1203px;top:26px;width:1px;height:794px;background:#fcf7f0"></div>
<div class="abs" style="left:1px;top:819px;width:1203px;height:1px;background:#fcf7f0"></div>
<div class="abs" style="left:0;top:0;width:1203px;height:819px;border:1px solid #0078d7;box-sizing:content-box;pointer-events:none"></div>
</div></body></html>
